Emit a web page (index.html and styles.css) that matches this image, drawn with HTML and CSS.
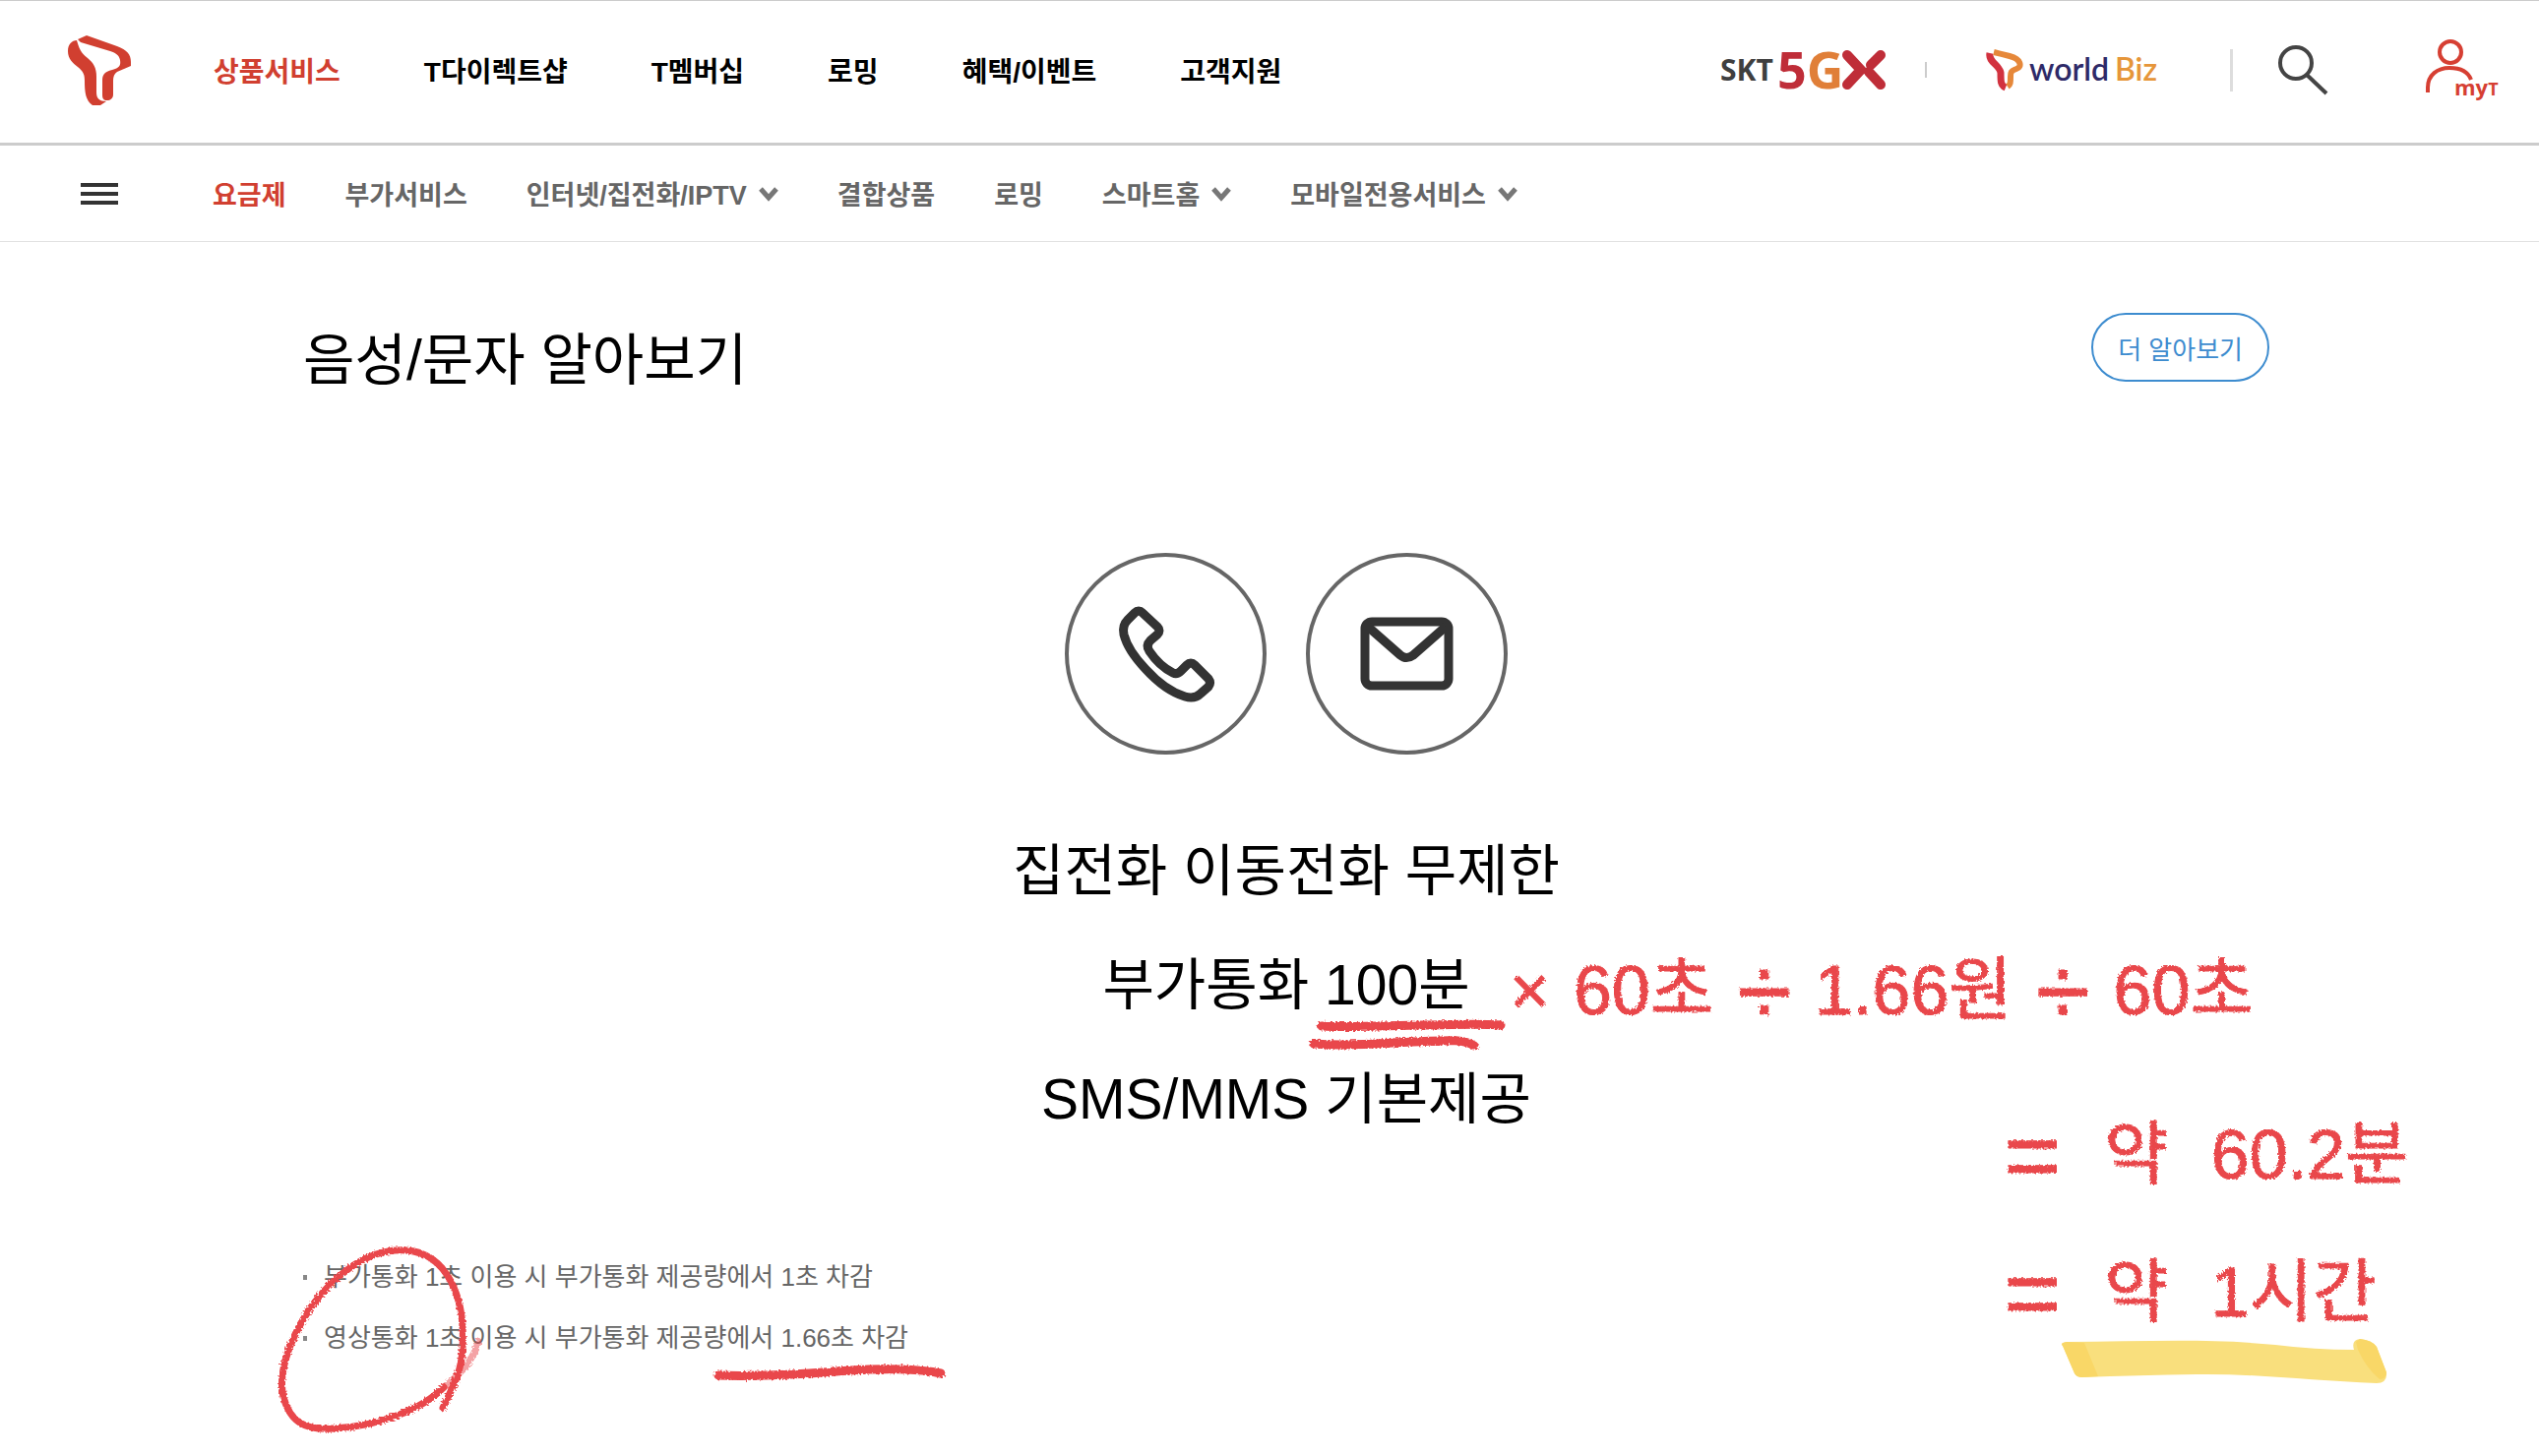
FILE: index.html
```html
<!DOCTYPE html>
<html lang="ko">
<head>
    <meta charset="UTF-8">
    <meta name="viewport" content="width=device-width, initial-scale=1.0">
    <title>음성/문자 알아보기</title>
    <link rel="stylesheet" href="styles.css">
</head>
<body>
<!-- rough edge for the pen strokes -->
<svg class="defs" width="0" height="0" aria-hidden="true">
    <filter id="crayon" x="-10%" y="-20%" width="120%" height="140%">
        <feTurbulence type="fractalNoise" baseFrequency="0.5" numOctaves="2" result="noise"/>
        <feDisplacementMap in="SourceGraphic" in2="noise" scale="5"/>
    </filter>
</svg>

<header class="header">
    <a class="logo" href="#" aria-label="T world">
        <svg width="64" height="71" viewBox="0 0 64 71">
            <path d="M9 5C4 5 0 9 0 16C0 24 5 28 10 32C16 37 17 40 17 46C17 58 18 66 25 71L33 71L39 67C32 67 29 64 29 58V42C29 33 26 28 20 23C13 18 11 12 9 5Z"/>
            <path d="M10 4L19 0L50 11C60 15 64 19 64 27V31L50 37C47 39 46 42 46 46V60C46 64 43 66 40 66C36 66 35 64 35 60V46C35 40 37 37 45 35C52 33 54 31 53 25C52 20 49 18 43 16L13 7Z"/>
        </svg>
    </a>
    <nav class="main-nav">
        <a class="active" href="#">상품서비스</a>
        <a href="#">T다이렉트샵</a>
        <a href="#">T멤버십</a>
        <a href="#">로밍</a>
        <a href="#">혜택/이벤트</a>
        <a href="#">고객지원</a>
    </nav>
    <div class="utils">
        <a class="brand-5gx" href="#" aria-label="SKT 5GX">
            <svg width="168" height="44" viewBox="0 0 168 44">
                <text class="skt" x="0" y="33">SKT</text>
                <text class="five" x="58" y="41">5<tspan class="gee">G</tspan></text>
                <path d="M129 7L143 22L129 37M163 7L153 17M163 37L151 24" class="ex"/>
            </svg>
        </a>
        <span class="bar small"></span>
        <a class="brand-biz" href="#" aria-label="T world Biz">
            <svg width="174" height="44" viewBox="0 0 174 44">
                <path d="M4 5C2 14 14 17 15 25C15 34 15 38 20 40" class="biz-left"/>
                <path d="M8 4L24 8C36 11 37 19 31 21C25 23 25 25 25 29C25 35 25 37 22 39" class="biz-right"/>
                <text class="world" x="44" y="33">world</text>
                <text class="biz" x="131" y="33">Biz</text>
            </svg>
        </a>
        <span class="bar"></span>
        <button class="icon-btn search" type="button" aria-label="검색">
            <svg width="52" height="54" viewBox="0 0 52 54">
                <circle cx="19" cy="20" r="16"/>
                <path d="M30 32L50 51"/>
            </svg>
        </button>
        <a class="my" href="#" aria-label="my T">
            <svg width="74" height="66" viewBox="0 0 74 66">
                <circle cx="26" cy="15" r="11"/>
                <path d="M3 56V51C3 38 13 31 25 31C36 31 44 35 47 43"/>
                <text x="30" y="59">my<tspan class="tee">T</tspan></text>
            </svg>
        </a>
    </div>
</header>

<div class="sub-header">
    <button class="menu-btn" type="button" aria-label="전체메뉴"><i></i><i></i><i></i></button>
    <nav class="sub-nav">
        <a class="active" href="#">요금제</a>
        <a href="#">부가서비스</a>
        <a href="#">인터넷/집전화/IPTV
            <svg width="20" height="14" viewBox="0 0 20 14"><path d="M2 2L10 11L18 2"/></svg>
        </a>
        <a href="#">결합상품</a>
        <a href="#">로밍</a>
        <a href="#">스마트홈
            <svg width="20" height="14" viewBox="0 0 20 14"><path d="M2 2L10 11L18 2"/></svg>
        </a>
        <a href="#">모바일전용서비스
            <svg width="20" height="14" viewBox="0 0 20 14"><path d="M2 2L10 11L18 2"/></svg>
        </a>
    </nav>
</div>

<main class="content">
    <div class="title-row">
        <h1>음성/문자 알아보기</h1>
        <button class="more-btn" type="button">더 알아보기</button>
    </div>

    <section class="benefit">
        <div class="icons">
            <svg width="205" height="205" viewBox="0 0 205 205">
                <circle cx="102.5" cy="102.5" r="100.5"/>
                <path d="M71 61Q75 57 79 61L94 75Q98 79 94 83L87 89Q82 94 86 100Q96 115 110 122Q114 124 118 120L124 114Q128 110 132 114L146 128Q149 132 146 136L138 143Q132 149 122 146Q102 140 82 118Q64 99 60 83Q58 74 64 68Z"/>
            </svg>
            <svg width="205" height="205" viewBox="0 0 205 205">
                <circle cx="102.5" cy="102.5" r="100.5"/>
                <rect x="60" y="70" width="85" height="65" rx="7"/>
                <path d="M63 75L96 104Q102 109 109 104L142 75"/>
            </svg>
        </div>
        <p>집전화 이동전화 무제한</p>
        <p>부가통화 <span class="mark">100분
            <svg class="ink underline" width="210" height="40" viewBox="0 0 210 40">
                <path d="M17 13C50 15 90 12 120 12S170 10 199 12M9 31C50 34 80 30 110 29S160 25 172 33"/>
            </svg>
            <span class="calc">
                <span>×</span><span>60초</span><span class="op">÷</span><span>1.66원</span><span class="op">÷</span><span>60초</span>
            </span>
        </span></p>
        <p>SMS/MMS 기본제공</p>
    </section>

    <ul class="notes">
        <li>부가통화 1초 이용 시 부가통화 제공량에서 1초 차감</li>
        <li>영상통화 1초 이용 시 부가통화 제공량에서 1.66초 차감</li>
    </ul>
    <svg class="ink circle" width="220" height="200" viewBox="0 0 220 200">
        <path d="M175 171C182 155 194 138 195 110C198 60 180 14 138 11C95 8 60 42 40 70C15 108 8 140 13 160C20 186 35 194 64 192C110 190 155 172 176 150"/>
        <path class="faded" d="M176 150C194 136 207 120 211 104"/>
    </svg>
    <svg class="ink note-line" width="240" height="24" viewBox="0 0 240 24">
        <path d="M6 14C60 16 110 11 140 9S210 7 232 12"/>
    </svg>

    <div class="results">
        <div class="result"><span class="op">=</span><span>약</span><span>60.2분</span></div>
        <div class="result last"><span class="op">=</span><span>약</span><span>1시간</span></div>
        <svg class="highlight" width="336" height="52" viewBox="0 0 336 52">
            <path d="M4 8Q1 5 8 4C80 4 150 0 220 7Q260 12 300 12Q297 2 306 1Q318 2 323 9L333 35Q334 46 323 46C260 44 200 36 140 37Q80 38 24 40Q18 40 16 36Z"/>
            <path class="edge" d="M4 8Q1 5 8 4L26 5L40 39L24 40Q18 40 16 36ZM302 4L306 1Q318 2 323 9L333 35Q333 42 326 42Q312 30 304 12Z"/>
        </svg>
    </div>
</main>
</body>
</html>
```
FILE: styles.css
```css
* {
    box-sizing: border-box;
}

body {
    margin: 0;
    background: #fff;
    color: #000;
    font-family: "Liberation Sans", "Noto Sans CJK KR", sans-serif;
}

a {
    color: inherit;
    text-decoration: none;
}

button {
    padding: 0;
    border: 0;
    background: none;
    font-family: inherit;
    cursor: pointer;
}

svg {
    display: block;
    overflow: visible;
}

.defs {
    position: absolute;
}

/* Header */
.header {
    display: flex;
    align-items: center;
    height: 148px;
    padding: 0 42px 4px 69px;
    border-top: 1px solid #ccc;
    border-bottom: 3px solid #ccc;
}

.logo {
    margin-right: 84px;
    fill: #d13f30;
}

.main-nav {
    display: flex;
    gap: 85px;
    font-size: 28px;
    font-weight: 700;
    white-space: nowrap;
}

.active {
    color: #d13f30;
}

.utils {
    display: flex;
    align-items: center;
    margin-left: auto;
}

.bar {
    width: 3px;
    height: 43px;
    margin: 0 45px 0 74px;
    background: #ddd;
}

.bar.small {
    width: 2px;
    height: 16px;
    margin: 0 60px 0 40px;
    background: #ccc;
}

.brand-5gx {
    font-family: "Open Sans", sans-serif;
    font-weight: 700;
}

.skt {
    font-size: 30px;
    fill: #3f3f3f;
}

.five {
    font-size: 52px;
    fill: #bf2d38;
}

.gee {
    fill: #e07f38;
}

.ex {
    fill: none;
    stroke: #bf2d38;
    stroke-width: 10;
    stroke-linecap: round;
}

.brand-biz {
    font-family: Lato, sans-serif;
    font-size: 32px;
    font-weight: 600;
}

.biz-left,
.biz-right {
    fill: none;
    stroke: #d2323f;
    stroke-width: 7;
}

.biz-right {
    stroke: #e6883a;
    stroke-width: 6;
}

.world {
    fill: #2e2a68;
}

.biz {
    fill: #e6963a;
}

.search svg {
    fill: none;
    stroke: #444;
    stroke-width: 4;
}

.my {
    margin-left: 98px;
}

.my svg {
    fill: none;
    stroke: #d63f33;
    stroke-width: 4;
}

.my text {
    fill: #d63f33;
    stroke: none;
    font-family: "Open Sans", sans-serif;
    font-size: 22px;
    font-weight: 700;
}

.my .tee {
    font-size: 18px;
}

/* Second menu */
.sub-header {
    display: flex;
    align-items: center;
    height: 98px;
    padding: 0 82px;
    border-bottom: 1px solid #e1e1e1;
}

.menu-btn {
    display: flex;
    flex-direction: column;
    gap: 5px;
    width: 38px;
    margin-right: 96px;
}

.menu-btn i {
    width: 100%;
    height: 4px;
    background: #333;
}

.sub-nav {
    display: flex;
    gap: 60px;
    color: #666;
    font-size: 27px;
    font-weight: 700;
    white-space: nowrap;
}

.sub-nav a {
    display: flex;
    align-items: center;
    gap: 12px;
}

.sub-nav .active {
    color: #d13f30;
}

.sub-nav svg {
    fill: none;
    stroke: #777;
    stroke-width: 5;
}

/* Content */
.content {
    position: relative;
    padding: 72px 274px 88px 308px;
}

.title-row {
    display: flex;
    justify-content: space-between;
    align-items: flex-start;
    height: 96px;
}

h1 {
    margin: 0;
    font-size: 57px;
    font-weight: 400;
    line-height: 96px;
}

.more-btn {
    height: 70px;
    padding: 0 25px;
    border: 2px solid #3d8ccf;
    border-radius: 35px;
    color: #3d8ccf;
    font-size: 26px;
}

.benefit {
    padding-top: 148px;
    text-align: center;
}

.icons {
    display: flex;
    justify-content: center;
    gap: 40px;
    margin-bottom: 60px;
    fill: none;
    stroke: #333;
    stroke-width: 9;
    stroke-linejoin: round;
}

.icons circle {
    stroke: #666;
    stroke-width: 4;
}

.benefit p {
    margin: 0;
    font-size: 57px;
    line-height: 116px;
    white-space: nowrap;
}

.notes {
    margin: 92px 0 0;
    padding: 0;
    list-style: none;
    color: #666;
    font-size: 26px;
    line-height: 62px;
}

.notes li {
    display: flex;
    align-items: center;
    gap: 17px;
}

.notes li::before {
    content: "";
    width: 4px;
    height: 5px;
    background: #888;
}

/* Pen notes over the page */
.ink {
    position: absolute;
    fill: none;
    stroke: #e9474b;
    stroke-width: 9;
    stroke-linecap: round;
    filter: url(#crayon);
}

.mark {
    position: relative;
    display: inline-block;
}

.underline {
    left: -20px;
    top: 87px;
}

.calc,
.result {
    display: flex;
    align-items: center;
    color: #e9474b;
    font-size: 70px;
    line-height: 100px;
    white-space: nowrap;
    -webkit-text-stroke: 1px #e9474b;
    filter: url(#crayon);
}

.op {
    font-size: 100px;
}

.calc {
    position: absolute;
    left: 188px;
    top: 14px;
    gap: 24px;
}

.circle {
    left: 275px;
    top: 1014px;
    stroke-width: 7;
}

.circle .faded {
    opacity: .5;
}

.note-line {
    left: 724px;
    top: 1138px;
}

.results {
    position: absolute;
    right: 108px;
    top: 878px;
    width: 436px;
}

.result {
    gap: 44px;
    margin-bottom: 40px;
}

.result.last {
    position: relative;
    z-index: 1;
    margin: 0;
}

.highlight {
    position: absolute;
    left: 56px;
    top: 236px;
    fill: #f9df7d;
}

.highlight .edge {
    fill: #f9d767;
}
```
